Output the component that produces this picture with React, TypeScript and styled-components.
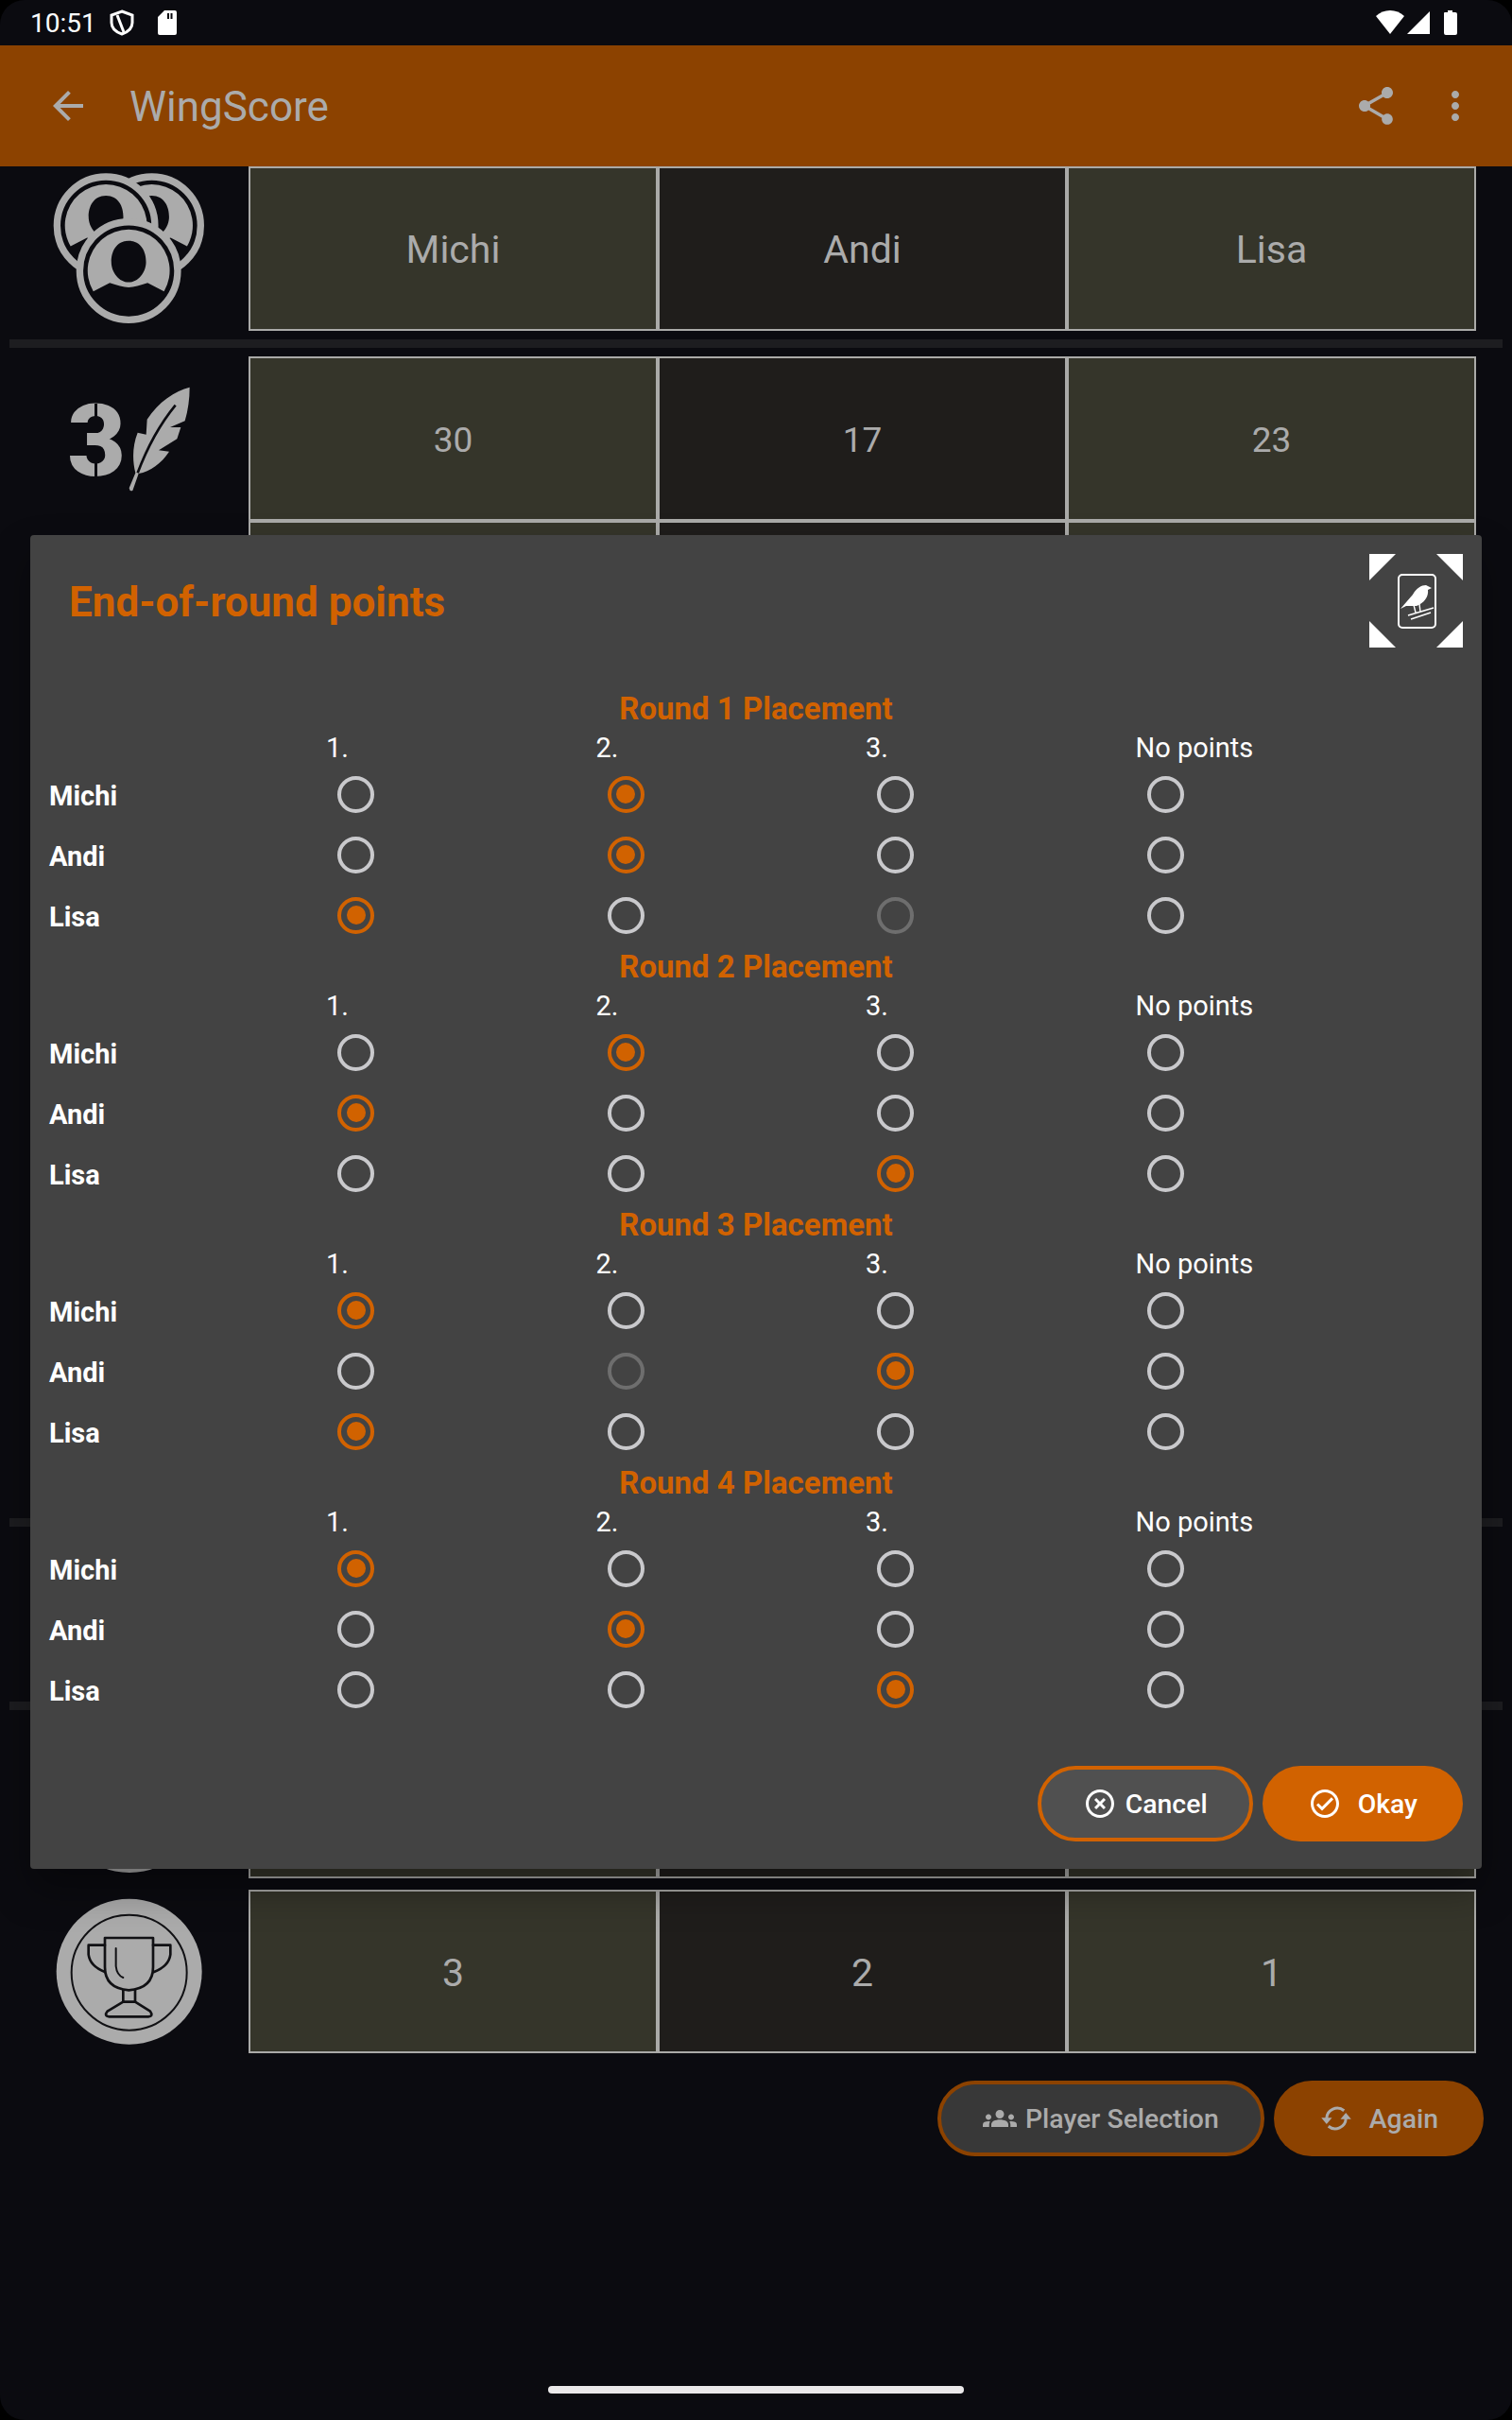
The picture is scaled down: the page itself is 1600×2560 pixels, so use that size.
import React, { ReactElement } from 'react';
import styled, { createGlobalStyle } from 'styled-components';
import { MdArrowBack, MdGroups, MdMoreVert, MdOutlineCheckCircle, MdOutlineHighlightOff, MdShare } from 'react-icons/md';

const GlobalStyle = createGlobalStyle`
  html, body {
    margin: 0;
    padding: 0;
    background: #000;
    font-family: Roboto, "Liberation Sans", sans-serif;
  }
`;

const Screen = styled.div`
  position: relative;
  width: 1600px;
  height: 2560px;
  overflow: hidden;
  background: #0b0b10;
  border-radius: 26px;
`;

const StatusBar = styled.div`
  height: 48px;
  display: flex;
  align-items: center;
  padding: 0 56px 0 32px;
  color: #fff;
  font-size: 28px;
`;

const StatusTime = styled.span`
  margin-right: 14px;
`;

const StatusGap = styled.div`
  flex: 1;
`;

const AppBar = styled.header`
  height: 128px;
  display: flex;
  align-items: center;
  padding: 0 36px 0 48px;
  background: #8c4200;
  color: #ababab;
`;

const AppTitle = styled.h1`
  flex: 1;
  margin: 2px 0 0 41px;
  font-size: 44px;
  font-weight: 400;
`;

const BarIcon = styled.span`
  display: flex;
  margin-left: ${(p: { $gap?: number }) => p.$gap ?? 0}px;
  font-size: 48px;
`;

const Board = styled.main`
  display: flex;
  flex-direction: column;
`;

const ScoreRow = styled.div<{ $height: number; $top?: number }>`
  display: grid;
  grid-template-columns: 263px repeat(3, 433px);
  height: ${(p) => p.$height}px;
  margin-top: ${(p) => p.$top ?? 0}px;
`;

const RowIcon = styled.div`
  display: flex;
  align-items: center;
  justify-content: center;
  padding-left: 10px;
  overflow: hidden;
`;

const Cell = styled.div<{ $odd: boolean; $large?: boolean }>`
  display: flex;
  align-items: center;
  justify-content: center;
  box-sizing: border-box;
  padding-top: 2px;
  border: 2px solid #aaaaa8;
  background: ${(p) => (p.$odd ? '#35352a' : '#1f1d1b')};
  color: #ababab;
  font-size: ${(p) => (p.$large ? 41 : 37)}px;
`;

const Rule = styled.div`
  height: 9px;
  margin: 9px 10px 9px 10px;
  background: #1d1d20;
`;

const HiddenDisc = styled.div`
  width: 156px;
  height: 156px;
  border-radius: 50%;
  background: #ababab;
`;

const FeatherBadge = styled.div`
  display: flex;
  align-items: center;
  width: 140px;
  height: 127px;
`;

const StencilDigit = styled.span`
  position: relative;
  flex: none;
  width: 67px;
  margin-top: 6px;
  padding-left: 5px;
  box-sizing: border-box;
  color: #ababab;
  font-size: 106px;
  font-weight: 900;
  line-height: 121px;
  &::before,
  &::after {
    content: '';
    position: absolute;
    left: 33px;
    width: 3px;
    height: 22px;
    background: #0b0b10;
  }
  &::before {
    top: 20px;
  }
  &::after {
    bottom: 20px;
  }
`;

const ActionBar = styled.div`
  display: flex;
  justify-content: flex-end;
  gap: 10px;
  margin-top: 29px;
  padding-right: 30px;
`;

const PillButton = styled.button<{ $filled?: boolean; $dim?: boolean; $gap: number }>`
  height: 80px;
  display: flex;
  align-items: center;
  gap: ${(p) => p.$gap}px;
  box-sizing: border-box;
  padding: 0 ${(p) => (p.$filled ? 48 : 44)}px;
  border: ${(p) => (p.$filled ? 'none' : `4px solid ${p.$dim ? '#8c4200' : '#d16200'}`)};
  border-radius: 40px;
  background: ${(p) => {
    if (p.$filled) return p.$dim ? '#8c4200' : '#d16200';
    return p.$dim ? '#383838' : '#505050';
  }};
  color: ${(p) => (p.$dim ? '#ababab' : '#fff')};
  font-family: inherit;
  font-size: 28.4px;
  font-weight: 500;
  svg {
    flex: none;
    width: 36px;
    height: 36px;
  }
`;

const HomeIndicator = styled.div`
  position: absolute;
  left: 580px;
  bottom: 28px;
  width: 440px;
  height: 8px;
  border-radius: 4px;
  background: #ebe9ea;
`;

const Dialog = styled.section`
  position: absolute;
  left: 32px;
  top: 566px;
  width: 1536px;
  height: 1411px;
  box-sizing: border-box;
  padding: 20px 20px 0 0;
  border-radius: 4px;
  background: #434343;
  box-shadow: 0 22px 40px rgba(0, 0, 0, 0.35);
`;

const DialogHeader = styled.div`
  display: flex;
  align-items: center;
  justify-content: space-between;
  height: 99px;
  margin-bottom: 43px;
`;

const DialogTitle = styled.h2`
  margin: 3px 0 0 41px;
  color: #d16200;
  font-size: 44px;
  font-weight: 700;
`;

const RoundHeading = styled.div`
  height: 44px;
  line-height: 44px;
  padding-left: 20px;
  text-align: center;
  color: #d16200;
  font-size: 33px;
  font-weight: 700;
`;

const PlacementGrid = styled.div`
  display: grid;
  grid-template-columns: 293px repeat(4, 285.5px);
  grid-template-rows: 36px repeat(3, 64px);
  margin-bottom: 1px;
  padding-left: 20px;
`;

const ColumnLabel = styled.div`
  line-height: 39px;
  color: #fff;
  font-size: 29px;
`;

const PlayerLabel = styled.div`
  display: flex;
  align-items: center;
  padding-top: 3px;
  color: #fff;
  font-size: 29px;
  font-weight: 700;
`;

const RadioCell = styled.div`
  display: flex;
  align-items: center;
  padding-left: 12px;
`;

const Radio = styled.span<{ $checked: boolean; $disabled: boolean }>`
  width: 39px;
  height: 39px;
  display: flex;
  align-items: center;
  justify-content: center;
  box-sizing: border-box;
  border: 4px solid ${(p) => {
    if (p.$checked) return '#d16200';
    return p.$disabled ? '#6e6e6e' : '#c9c9cc';
  }};
  border-radius: 50%;
  &::after {
    content: '';
    display: ${(p) => (p.$checked ? 'block' : 'none')};
    width: 20px;
    height: 20px;
    border-radius: 50%;
    background: #d16200;
  }
`;

const DialogFooter = styled.div`
  display: flex;
  justify-content: flex-end;
  gap: 10px;
  margin-top: 49px;
`;

const PLAYERS = ['Michi', 'Andi', 'Lisa'];
const COLUMNS = ['1.', '2.', '3.', 'No points'];
const HIDDEN_ROWS = [174, 174, 174, 174, 174, 176];

type RoundData = { picks: number[]; disabled?: [number, number] };

const ROUNDS: RoundData[] = [
  { picks: [1, 1, 0], disabled: [2, 2] },
  { picks: [1, 0, 2] },
  { picks: [0, 2, 0], disabled: [1, 1] },
  { picks: [0, 1, 2] },
];

function PlayersIcon(): ReactElement {
  const coin = (cx: number, cy: number): ReactElement => (
    <g key={`${cx}-${cy}`}>
      <circle cx={cx} cy={cy} r={155} fill="#0b0b10" stroke="#ababab" strokeWidth={22} />
      <path
        fillRule="evenodd"
        fill="#ababab"
        d={`M${cx - 112} ${cy + 65} A130 130 0 1 1 ${cx + 112} ${cy + 65} L${cx + 60} ${cy + 38} Q${cx + 25} ${cy + 50} ${cx} ${cy + 52} Q${cx - 25} ${cy + 50} ${cx - 60} ${cy + 38} Z M${cx} ${cy - 95} C${cx - 40} ${cy - 95} ${cx - 55} ${cy - 60} ${cx - 55} ${cy - 28} C${cx - 55} ${cy + 5} ${cx - 30} ${cy + 36} ${cx} ${cy + 36} C${cx + 30} ${cy + 36} ${cx + 55} ${cy + 5} ${cx + 55} ${cy - 28} C${cx + 55} ${cy - 60} ${cx + 40} ${cy - 95} ${cx} ${cy - 95} Z`}
      />
    </g>
  );
  return (
    <svg width={167} height={167} viewBox="69 35 500 500">
      {coin(391, 211)}
      {coin(246, 211)}
      {coin(318, 354)}
    </svg>
  );
}

function FeatherIcon(): ReactElement {
  return (
    <svg width={70} height={115} viewBox="310 710 210 345">
      <path
        fill="#ababab"
        d="M510 718 C465 728 410 765 375 820 L372 868 L345 862 C328 905 328 950 338 990 L318 1038 Q320 1050 329 1046 L348 992 C385 985 420 960 445 922 L412 918 L470 882 L482 845 L448 845 L495 825 C505 790 510 755 510 718 Z"
      />
      <path d="M465 775 C420 830 375 910 345 990" fill="none" stroke="#0b0b10" strokeWidth={8} />
    </svg>
  );
}

function TrophyIcon(): ReactElement {
  return (
    <svg width={160} height={160} viewBox="80 170 480 480">
      <circle cx={319} cy={409} r={231} fill="#ababab" />
      <g fill="none" stroke="#111114" strokeWidth={8} strokeLinejoin="round" strokeLinecap="round">
        <circle cx={319} cy={412} r={183} strokeWidth={6} />
        <path d="M242 302 H395 V395 Q395 462 318 468 Q242 462 242 395 Z" />
        <path d="M242 325 H190 V355 Q195 392 242 410" />
        <path d="M395 325 H450 V355 Q445 392 398 410" />
        <path d="M300 468 V505 H338 V468" />
        <path d="M300 505 L250 535 Q238 550 256 552 H380 Q397 550 386 535 L338 505" />
        <path d="M277 335 V392 Q280 420 300 428" strokeWidth={6} />
      </g>
    </svg>
  );
}

function CardIcon(): ReactElement {
  return (
    <svg width={99} height={99} viewBox="0 0 99 99">
      <g fill="#fff">
        <path d="M0 0 H28 L0 28 Z" />
        <path d="M71 0 H99 V28 Z" />
        <path d="M0 71 L28 99 H0 Z" />
        <path d="M99 71 V99 H71 Z" />
        <path d="M33 58 L46 43 C50 36 55 33 60 33 L66 36 L62 38 C63 45 58 52 50 55 L39 55 Z" />
      </g>
      <rect x={31} y={22} width={39} height={56} rx={4} fill="none" stroke="#fff" strokeWidth={2} />
      <path d="M47 54 L49 62 M53 53 L54 61 M41 65 L68 57 M44 69 L65 62" fill="none" stroke="#fff" strokeWidth={1.4} />
    </svg>
  );
}

function SyncIcon(): ReactElement {
  return (
    <svg viewBox="0 0 24 24">
      <g fill="none" stroke="currentColor" strokeWidth={2}>
        <path d="M17.5 6.5 A7.5 7.5 0 0 0 5.2 12" />
        <path d="M6.5 17.5 A7.5 7.5 0 0 0 18.8 12" />
      </g>
      <path fill="currentColor" d="M1.5 11.5 H9 L5.2 16 Z" />
      <path fill="currentColor" d="M15 12.5 H22.5 L18.8 8 Z" />
    </svg>
  );
}

function SignalIcons(): ReactElement {
  return (
    <svg width={90} height={28} viewBox="0 0 90 28">
      <path fill="#fff" d="M2 7 C10 -1 24 -1 32 7 L17 26 Z" />
      <path fill="#fff" d="M59 2 V26 H35 Z" />
      <path fill="#fff" d="M74 4 Q74 3 75 3 H78 V1 H83 V3 H86 Q88 3 88 5 V25 Q88 27 86 27 H76 Q74 27 74 25 Z" />
    </svg>
  );
}

function BlankCells(): ReactElement {
  return (
    <>
      <Cell $odd />
      <Cell $odd={false} />
      <Cell $odd />
    </>
  );
}

function App(): ReactElement {
  return (
    <Screen>
      <GlobalStyle />
      <StatusBar>
        <StatusTime>10:51</StatusTime>
        <svg width={26} height={28} viewBox="0 0 26 28">
          <path fill="none" stroke="#fff" strokeWidth={3} d="M13 2 L24 6 V14 C24 20 19 24 13 26 C7 24 2 20 2 14 V6 Z" />
          <path stroke="#fff" strokeWidth={3} d="M8 6 L15 24" />
        </svg>
        <svg width={22} height={26} viewBox="0 0 22 26" style={{ marginLeft: 24 }}>
          <path fill="#fff" fillRule="evenodd" d="M8 0 H19 Q21 0 21 2 V24 Q21 26 19 26 H3 Q1 26 1 24 V7 Z M11 3 V9 H13 V3 Z M14.5 3 V9 H16.5 V3 Z" />
        </svg>
        <StatusGap />
        <SignalIcons />
      </StatusBar>
      <AppBar>
        <BarIcon>
          <MdArrowBack />
        </BarIcon>
        <AppTitle>WingScore</AppTitle>
        <BarIcon>
          <MdShare />
        </BarIcon>
        <BarIcon $gap={36}>
          <MdMoreVert />
        </BarIcon>
      </AppBar>
      <Board>
        <ScoreRow $height={174}>
          <RowIcon>
            <PlayersIcon />
          </RowIcon>
          <Cell $odd $large>Michi</Cell>
          <Cell $odd={false} $large>Andi</Cell>
          <Cell $odd $large>Lisa</Cell>
        </ScoreRow>
        <Rule />
        <ScoreRow $height={174}>
          <RowIcon>
            <FeatherBadge>
              <StencilDigit>3</StencilDigit>
              <FeatherIcon />
            </FeatherBadge>
          </RowIcon>
          <Cell $odd>30</Cell>
          <Cell $odd={false}>17</Cell>
          <Cell $odd>23</Cell>
        </ScoreRow>
        {HIDDEN_ROWS.map((height, row) => (
          <ScoreRow key={row} $height={height}>
            <RowIcon />
            <BlankCells />
          </ScoreRow>
        ))}
        <Rule />
        <ScoreRow $height={167}>
          <RowIcon />
          <BlankCells />
        </ScoreRow>
        <Rule />
        <ScoreRow $height={169}>
          <RowIcon>
            <HiddenDisc />
          </RowIcon>
          <BlankCells />
        </ScoreRow>
        <ScoreRow $height={173} $top={12}>
          <RowIcon>
            <TrophyIcon />
          </RowIcon>
          <Cell $odd $large>3</Cell>
          <Cell $odd={false} $large>2</Cell>
          <Cell $odd $large>1</Cell>
        </ScoreRow>
        <ActionBar>
          <PillButton $dim $gap={9}>
            <MdGroups />
            Player Selection
          </PillButton>
          <PillButton $filled $dim $gap={17}>
            <SyncIcon />
            Again
          </PillButton>
        </ActionBar>
      </Board>
      <HomeIndicator />
      <Dialog>
        <DialogHeader>
          <DialogTitle>End-of-round points</DialogTitle>
          <CardIcon />
        </DialogHeader>
        {ROUNDS.map((round, index) => (
          <div key={index}>
            <RoundHeading>Round {index + 1} Placement</RoundHeading>
            <PlacementGrid>
              <ColumnLabel />
              {COLUMNS.map((label) => (
                <ColumnLabel key={label}>{label}</ColumnLabel>
              ))}
              {PLAYERS.map((player, row) => (
                <React.Fragment key={player}>
                  <PlayerLabel>{player}</PlayerLabel>
                  {COLUMNS.map((label, col) => (
                    <RadioCell key={label}>
                      <Radio
                        $checked={round.picks[row] === col}
                        $disabled={round.disabled?.[0] === row && round.disabled?.[1] === col}
                      />
                    </RadioCell>
                  ))}
                </React.Fragment>
              ))}
            </PlacementGrid>
          </div>
        ))}
        <DialogFooter>
          <PillButton $gap={9}>
            <MdOutlineHighlightOff />
            Cancel
          </PillButton>
          <PillButton $filled $gap={17}>
            <MdOutlineCheckCircle />
            Okay
          </PillButton>
        </DialogFooter>
      </Dialog>
    </Screen>
  );
}

export default App;
